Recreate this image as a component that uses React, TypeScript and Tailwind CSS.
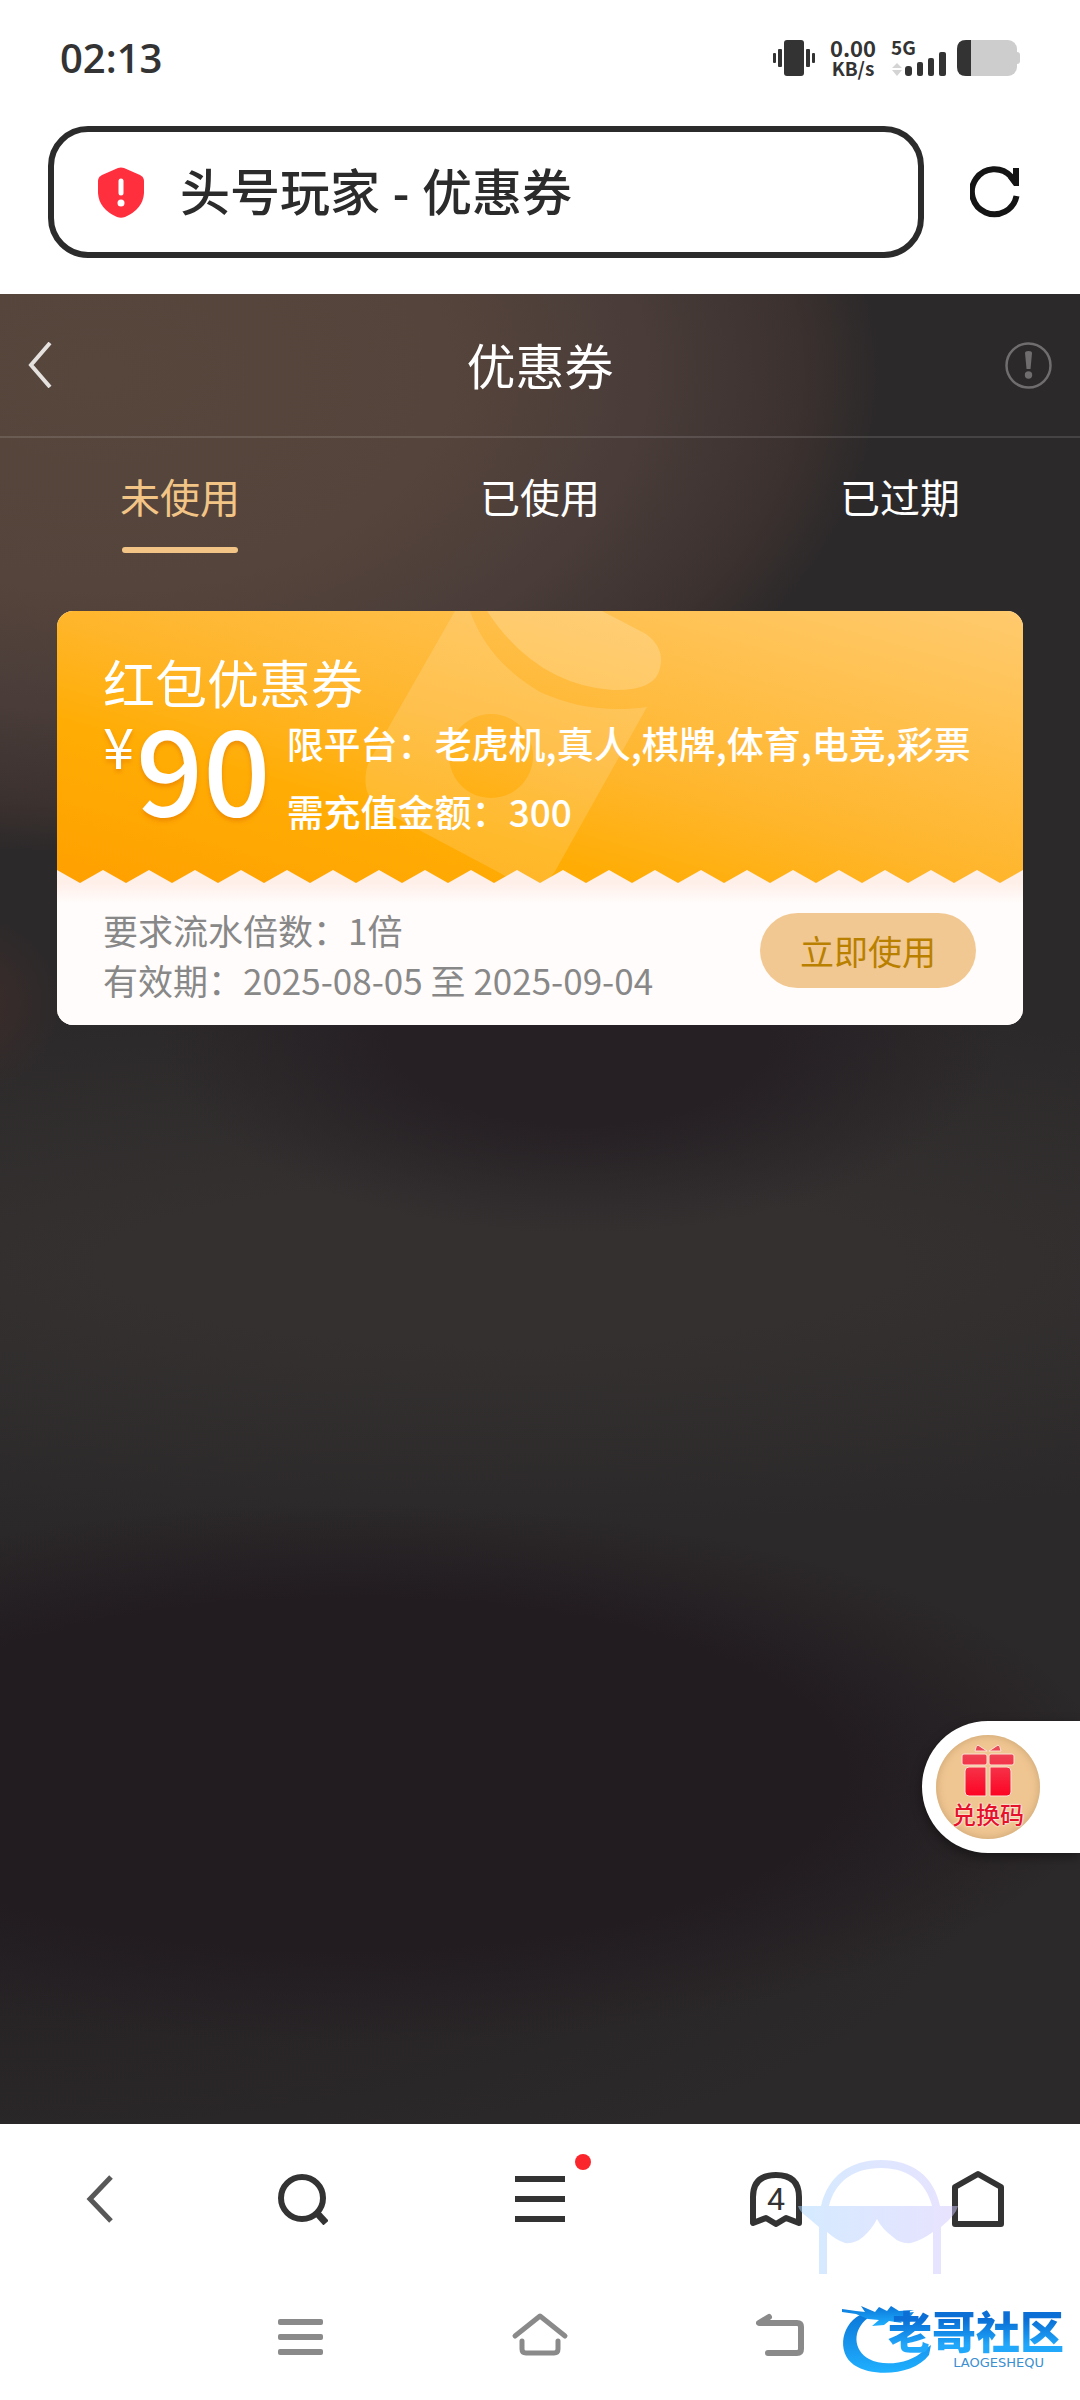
import { clsx } from 'clsx';
import { useState } from 'react';

interface Coupon {
  id: number;
  title: string;
  amount: number;
  platforms: string[];
  deposit: number;
  turnover: number;
  from: string;
  to: string;
}

type TabKey = 'unused' | 'used' | 'expired';

const tabs: { key: TabKey; label: string }[] = [
  { key: 'unused', label: '未使用' },
  { key: 'used', label: '已使用' },
  { key: 'expired', label: '已过期' },
];

const coupons: Record<TabKey, Coupon[]> = {
  unused: [
    {
      id: 1,
      title: '红包优惠券',
      amount: 90,
      platforms: ['老虎机', '真人', '棋牌', '体育', '电竞', '彩票'],
      deposit: 300,
      turnover: 1,
      from: '2025-08-05',
      to: '2025-09-04',
    },
  ],
  used: [],
  expired: [],
};

function StatusBar() {
  return (
    <div className="flex h-[116px] items-center justify-between px-[60px] text-[#333]">
      <span className="font-['Open_Sans',sans-serif] text-[40px] font-semibold leading-none">02:13</span>
      <div className="flex items-center">
        <svg width="43" height="36" viewBox="0 0 43 36" fill="#333" aria-hidden="true">
          <rect x="11" width="20" height="36" rx="3" />
          <rect x="0" y="13" width="3" height="10" rx="1" />
          <rect x="5" y="9" width="4" height="18" rx="1" />
          <rect x="33" y="9" width="4" height="18" rx="1" />
          <rect x="39" y="13" width="3" height="10" rx="1" />
        </svg>
        <div className="ml-[13px] mr-[14px] flex w-[48px] flex-col items-center pb-[3px] font-bold">
          <span className="text-[22px] leading-[22px]">0.00</span>
          <span className="text-[19px] leading-[19px]">KB/s</span>
        </div>
        <div className="flex w-[56px] flex-col">
          <span className="h-[12px] text-[19px] font-bold leading-[14px]">5G</span>
          <svg width="56" height="24" viewBox="0 0 56 24" fill="#333" aria-hidden="true">
            <path d="M1 16L6 11L11 16ZM1 18L6 24L11 18Z" fill="#d4d4d4" />
            <rect x="14" y="14" width="7" height="10" rx="3" />
            <rect x="26" y="10" width="6" height="14" rx="2" />
            <rect x="37" y="6" width="6" height="18" rx="2" />
            <rect x="48" y="0" width="7" height="24" rx="2" />
          </svg>
        </div>
        <svg className="ml-[10px]" width="63" height="36" viewBox="0 0 63 36" aria-hidden="true">
          <rect width="60" height="36" rx="9" fill="#cdcdcd" />
          <path d="M60 12Q63 12 63 15V21Q63 24 60 24Z" fill="#cdcdcd" />
          <path d="M9 0H14V36H9Q0 36 0 27V9Q0 0 9 0Z" fill="#333" />
        </svg>
      </div>
    </div>
  );
}

function AddressBar() {
  return (
    <div className="flex items-center pb-9 pl-12 pr-[60px] pt-[10px]">
      <button
        type="button"
        className="flex h-[132px] flex-1 items-center rounded-[40px] border-6 border-[#2b2b2b] pl-[44px] font-['Noto_Sans','Noto_Sans_CJK_SC',sans-serif] text-[50px] font-medium leading-none text-[#2b2b2b]"
      >
        <svg width="46" height="51" viewBox="0 0 46 51" aria-hidden="true">
          <path
            d="M20 1Q23 0 26 1L42 8Q46 10 46 14V26Q45 42 27 50Q23 51.500 19 50Q1 42 0 26V14Q0 10 4 8Z"
            fill="#ff2f3e"
          />
          <path d="M23 14V26" stroke="#fff" strokeWidth="5" strokeLinecap="round" />
          <circle cx="23" cy="36" r="3.500" fill="#fff" />
        </svg>
        <span className="ml-[36px]">头号玩家 - 优惠券</span>
      </button>
      <button type="button" aria-label="刷新" className="ml-[46px]">
        <svg width="50" height="52" viewBox="0 0 50 52" fill="none" stroke="#141414" strokeWidth="6" aria-hidden="true">
          <path d="M46.500 30A22.500 22.500 0 1 1 41 10.500L46 17" />
          <path d="M43 2H49V20H44L38 12L43 9Z" fill="#141414" stroke="none" />
        </svg>
      </button>
    </div>
  );
}

function PageHeader() {
  return (
    <header className="flex h-[144px] items-center justify-between border-b-2 border-white/12 px-7">
      <button type="button" aria-label="返回" className="w-[48px]">
        <svg width="24" height="46" viewBox="0 0 24 46" fill="none" stroke="#e4e1df" strokeWidth="4" aria-hidden="true">
          <path d="M22 1L3 23L22 45" />
        </svg>
      </button>
      <h1 className="pb-1 text-[49px] leading-none text-white">优惠券</h1>
      <button type="button" aria-label="说明" className="flex w-[48px] justify-end">
        <svg width="47" height="47" viewBox="0 0 47 47" aria-hidden="true">
          <circle cx="23.500" cy="23.500" r="22" fill="none" stroke="#6f6d6d" strokeWidth="2.500" />
          <path d="M20 11Q20 9 23.500 9Q27 9 27 11L25.500 27H21.500Z" fill="#6f6d6d" />
          <circle cx="23.500" cy="33" r="3.700" fill="#6f6d6d" />
        </svg>
      </button>
    </header>
  );
}

function CouponCard({ coupon }: { coupon: Coupon }) {
  return (
    <article className="overflow-hidden rounded-2xl bg-[#fffcfb]">
      <div className="relative bg-[linear-gradient(to_top_right,#ffa000_0%,#ffad05_30%,#ffb62d_50%,#ffca6e_100%)] pb-[38px] pl-[46px] pr-11 pt-11 text-white">
        <svg className="absolute left-0 top-0" width="700" height="272" viewBox="57 611 700 272" fill="#fff" aria-hidden="true">
          <path
            d="M455 611H470C482 645 506 672 540 692C575 708 610 712 647 707L558 866Q548 887 528 884Q514 882 500 873L385 812Q362 798 366 773Q366 768 370 760ZM491 714a42 42 0 1 0 .1 0Z"
            fillRule="evenodd"
            opacity="0.150"
          />
          <path d="M487 611H602L646 634Q665 648 660 668Q656 691 612 690Q535 684 487 611Z" opacity="0.200" />
        </svg>
        {/* Torn edge between the amount and the terms */}
        <svg className="absolute bottom-0 left-0 h-[13px] w-full" aria-hidden="true">
          <defs>
            <pattern id="teeth" width="46" height="13" patternUnits="userSpaceOnUse">
              <path d="M0 0L23 13L46 0V13H0Z" fill="#ffefe9" />
            </pattern>
          </defs>
          <rect width="100%" height="13" fill="url(#teeth)" />
        </svg>
        <div className="relative">
          <h2 className="text-[52px] leading-[54px]">{coupon.title}</h2>
          <div className="flex items-start">
            <div className="flex items-start [text-shadow:0_3px_4px_rgba(226,120,0,0.6)]">
              <span className="text-[56px] leading-[72px]">¥</span>
              <span className="ml-[2px] text-[118px] font-medium leading-[112px]">{coupon.amount}</span>
            </div>
            <div className="ml-4 text-[37px] font-medium leading-[68px]">
              <p className="whitespace-nowrap">限平台：{coupon.platforms.join(',')}</p>
              <p>需充值金额：{coupon.deposit}</p>
            </div>
          </div>
        </div>
      </div>
      <div className="flex items-start justify-between bg-[linear-gradient(#ffefe9,#fffcfb_20px)] pb-5 pl-[46px] pr-[47px] pt-[22px]">
        <div className="text-[35px] leading-[50px] text-[#888]">
          <p>要求流水倍数：{coupon.turnover}倍</p>
          <p>
            有效期：{coupon.from} 至 {coupon.to}
          </p>
        </div>
        <button type="button" className="mt-2 h-[75px] w-[216px] rounded-full bg-[#f2c892] text-[34px] leading-none text-[#b98000]">
          立即使用
        </button>
      </div>
    </article>
  );
}

function RedeemButton() {
  return (
    <button
      type="button"
      className="absolute bottom-[271px] right-0 flex h-[132px] w-[158px] items-center rounded-l-full bg-white pl-[14px] shadow-[0_4px_12px_rgba(0,0,0,0.4)]"
    >
      <span className="flex size-[104px] flex-col items-center rounded-full bg-[#efc591] pt-[9px] shadow-[inset_0_0_8px_#c9a473]">
        <svg width="56" height="54" viewBox="0 0 56 54" aria-hidden="true">
          <defs>
            <linearGradient id="gift" gradientUnits="userSpaceOnUse" x1="0" y1="0" x2="0" y2="54">
              <stop offset="0" stopColor="#e8505c" />
              <stop offset="0.500" stopColor="#f72c44" />
              <stop offset="1" stopColor="#fd0020" />
            </linearGradient>
          </defs>
          <g fill="url(#gift)" stroke="#fbe3d6" strokeWidth="1">
            <path d="M18 1Q16 1 15 7H27Z" />
            <path d="M38 1Q40 1 41 7H29Z" />
            <rect x="2" y="10" width="25" height="11" rx="2" />
            <rect x="29" y="10" width="25" height="11" rx="2" />
            <path d="M9 23H26V52H9Q5 52 5 48V27Q5 23 9 23Z" />
            <path d="M30 23H47Q51 23 51 27V48Q51 52 47 52H30Z" />
          </g>
        </svg>
        <span className="whitespace-nowrap text-[24px] font-medium leading-[32px] text-[#e6122c] [text-shadow:0_0_2px_#fff,0_0_2px_#fff]">
          兑换码
        </span>
      </span>
    </button>
  );
}

function BrowserToolbar() {
  return (
    <nav className="grid h-[150px] grid-cols-[200fr_204fr_272fr_200fr_204fr] items-center justify-items-center">
      <button type="button" aria-label="后退">
        <svg width="28" height="48" viewBox="0 0 28 48" fill="none" stroke="#585858" strokeWidth="5" aria-hidden="true">
          <path d="M25 2L4 24L25 46" />
        </svg>
      </button>
      <button type="button" aria-label="搜索">
        <svg width="52" height="52" viewBox="0 0 52 52" fill="none" stroke="#333" strokeWidth="6" aria-hidden="true">
          <circle cx="26" cy="25" r="21" />
          <path d="M40 39L50 50" strokeWidth="7" />
        </svg>
      </button>
      <button type="button" aria-label="菜单" className="relative">
        <svg width="50" height="46" viewBox="0 0 50 46" fill="#333" aria-hidden="true">
          <rect width="50" height="6" />
          <rect y="20" width="50" height="6" />
          <rect y="40" width="50" height="6" />
        </svg>
        <span className="absolute -right-[26px] -top-[22px] size-4 rounded-full bg-[#fb262c]" />
      </button>
      <button type="button" aria-label="标签页" className="relative font-['Roboto',sans-serif] text-[32px] leading-none text-[#333]">
        <svg width="52" height="55" viewBox="0 0 52 55" fill="none" stroke="#333" strokeWidth="6" strokeLinejoin="round" aria-hidden="true">
          <path d="M3 51V25Q3 3 26 3Q49 3 49 25V51L36 46L26 52L16 46Z" />
        </svg>
        <span className="absolute inset-0 flex items-center justify-center">4</span>
      </button>
      <button type="button" aria-label="主页">
        <svg width="52" height="58" viewBox="0 0 52 58" fill="none" stroke="#333" strokeWidth="6" strokeLinejoin="round" aria-hidden="true">
          <path d="M3 17L26 4L49 17V54H3Z" />
        </svg>
      </button>
    </nav>
  );
}

function SystemNav() {
  return (
    <nav className="grid h-[126px] grid-cols-3 items-center justify-items-center px-[180px]">
      <button type="button" aria-label="最近任务">
        <svg width="45" height="37" viewBox="0 0 45 37" fill="#8a8a8a" aria-hidden="true">
          <rect width="45" height="6" rx="2" />
          <rect y="15" width="45" height="6" rx="2" />
          <rect y="30" width="45" height="6" rx="2" />
        </svg>
      </button>
      <button type="button" aria-label="桌面">
        <svg width="58" height="50" viewBox="0 0 58 50" fill="none" stroke="#8a8a8a" strokeWidth="5" strokeLinecap="round" strokeLinejoin="round" aria-hidden="true">
          <path d="M4 24L29 4L54 24" />
          <path d="M11 29V37Q11 41 15 41H43Q47 41 47 37V29" />
        </svg>
      </button>
      <button type="button" aria-label="返回上一级">
        <svg width="48" height="50" viewBox="0 0 48 50" fill="none" stroke="#8a8a8a" strokeWidth="6" strokeLinecap="round" strokeLinejoin="round" aria-hidden="true">
          <path d="M13 5L3 11H41Q45 11 45 15V37Q45 41 41 41H12" />
        </svg>
      </button>
    </nav>
  );
}

function CommunityMark() {
  return (
    <div className="pointer-events-none absolute bottom-0 right-0 h-[242px] w-[284px]">
      <svg className="absolute inset-0" width="284" height="242" viewBox="796 2158 284 242" aria-hidden="true">
        <defs>
          <linearGradient id="shades" gradientUnits="userSpaceOnUse" x1="798" y1="0" x2="958" y2="0">
            <stop offset="0" stopColor="#a9d6ff" />
            <stop offset="1" stopColor="#d2c6ff" />
          </linearGradient>
          <linearGradient id="dragon" x1="0" y1="0" x2="0" y2="1">
            <stop offset="0" stopColor="#0b76d8" />
            <stop offset="1" stopColor="#20b0ff" />
          </linearGradient>
        </defs>
        <g opacity="0.500">
          <path
            d="M798 2206H821C828 2176 850 2160 881 2160C912 2160 934 2176 940 2206H958Q956 2215 941 2227V2274H933V2232Q922 2240 911 2243Q900 2244 893 2237Q882 2229 877 2219Q872 2229 863 2237Q855 2244 845 2243Q836 2240 827 2232V2274H819V2227L806 2216Q800 2212 798 2206ZM829 2206H932C926 2182 908 2168 881 2168C853 2168 835 2182 829 2206Z"
            fill="url(#shades)"
            fillRule="evenodd"
          />
        </g>
        <g fill="url(#dragon)">
          <path d="M864 2313C841 2322 836 2352 854 2365C874 2378 914 2375 929 2355L931 2345L923 2351C913 2362 885 2368 869 2359C853 2350 852 2330 868 2318L877 2312Z" />
          <path d="M842 2309L856 2311L865 2312L861 2306L875 2312L879 2307L887 2311L891 2306L899 2311L914 2310L904 2313L914 2312L911 2316L905 2316L911 2322L898 2319L902 2323L889 2321L884 2325L872 2326L879 2320L868 2319L856 2314L842 2312Z" />
        </g>
      </svg>
      <div className="absolute bottom-[30px] right-4 flex flex-col items-end">
        <span className="bg-linear-to-b from-[#0b6fd6] from-30% to-[#22a8fb] to-80% bg-clip-text text-[44px] font-black leading-[52px] text-transparent">
          老哥社区
        </span>
        <span className="mr-5 font-['DejaVu_Sans',sans-serif] text-[13px] leading-[14px] text-[#3c8fd0]">LAOGESHEQU</span>
      </div>
    </div>
  );
}

export default function App() {
  const [active, setActive] = useState<TabKey>('unused');

  return (
    <div className="relative flex min-h-screen flex-col bg-white font-['Noto_Sans_CJK_SC',sans-serif]">
      <StatusBar />
      <AddressBar />

      <main className="relative flex-1 bg-[#2c292a] bg-[radial-gradient(780px_480px_at_100px_80px,#57463c_0%,#55443b_45%,#493c39_70%,#3b312f_90%,#3b312f00_100%),radial-gradient(90px_90px_at_-30px_710px,#3d2d2a_0%,#3d2d2a00_100%),radial-gradient(420px_200px_at_580px_740px,#262024_0%,#262024_45%,#26202400_100%),radial-gradient(760px_270px_at_350px_1480px,#221c20_0%,#221c20_65%,#221c2000_100%),radial-gradient(1000px_360px_at_0px_1560px,#242023_0%,#24202300_100%),radial-gradient(1300px_260px_at_500px_970px,#343030_0%,#343030_30%,#34303000_100%)]">
        <PageHeader />

        <div role="tablist" className="grid grid-cols-3 pt-7">
          {tabs.map(({ key, label }) => (
            <button
              key={key}
              type="button"
              role="tab"
              aria-selected={active === key}
              onClick={() => setActive(key)}
              className={clsx(
                'flex flex-col items-center gap-[21px] text-[40px] leading-[60px]',
                active === key ? 'text-[#f2c587]' : 'text-white',
              )}
            >
              {label}
              <span className={clsx('h-[6px] w-[116px] rounded-full', active === key && 'bg-[#f2c587]')} />
            </button>
          ))}
        </div>

        <section className="flex flex-col gap-8 px-[57px] pt-[58px]">
          {coupons[active].map((coupon) => (
            <CouponCard key={coupon.id} coupon={coupon} />
          ))}
        </section>

        <RedeemButton />
      </main>

      <footer>
        <BrowserToolbar />
        <SystemNav />
      </footer>
      <CommunityMark />
    </div>
  );
}
